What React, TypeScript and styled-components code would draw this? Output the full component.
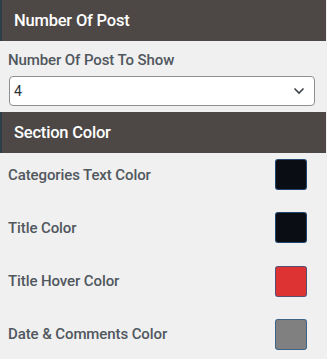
import React from "react";
import styled, { createGlobalStyle } from "styled-components";

const Global = createGlobalStyle`
  html, body { margin: 0; padding: 0; background: #f0f0f0; }
  body { font-family: Roboto, "Noto Sans", Arial, sans-serif; }
`;

const Panel = styled.div`
  width: 326px;
  background: #f0f0f0;
  display: flex;
  flex-direction: column;
`;

const SectionHeader = styled.div`
  height: 41px;
  box-sizing: border-box;
  background: #4d4846;
  border-left: 2px solid #2e3c48;
  padding-left: 12px;
  display: flex;
  align-items: center;
  color: #ffffff;
  font-size: 16.5px;
  font-weight: 500;
  letter-spacing: -0.2px;
`;

const Field = styled.div`
  padding: 9px 12px 6px 9px;
  display: flex;
  flex-direction: column;
  gap: 6px;
`;

const Label = styled.div`
  color: #50575e;
  font-size: 15px;
  line-height: 20px;
  font-weight: 500;
  margin-left: -1px;
  letter-spacing: -0.1px;
`;

const SelectBox = styled.div`
  height: 30px;
  box-sizing: border-box;
  width: 306px;
  background: #ffffff;
  border: 1px solid #8c8f94;
  border-radius: 4px;
  display: flex;
  align-items: center;
  justify-content: space-between;
  padding: 0 9px 0 4px;
  color: #2c3338;
  font-size: 14px;
`;

const ColorList = styled.div`
  display: flex;
  flex-direction: column;
  gap: 22.3px;
  padding: 6px 19px 0 8px;
`;

const ColorRow = styled.div`
  height: 31px;
  display: flex;
  align-items: center;
  justify-content: space-between;
`;

const RowLabel = styled.span`
  color: #50575e;
  font-size: 15px;
  font-weight: 500;
  letter-spacing: -0.1px;
`;

const Swatch = styled.div<{ $color: string }>`
  width: 32px;
  height: 31px;
  box-sizing: border-box;
  border-radius: 3px;
  border: 1px solid rgba(40, 90, 140, 0.75);
  background: ${(p) => p.$color};
`;

const rows = [
  { label: "Categories Text Color", color: "#0b0d14" },
  { label: "Title Color", color: "#0b0d14" },
  { label: "Title Hover Color", color: "#dd3333" },
  { label: "Date & Comments Color", color: "#808080" },
];

export default function App() {
  return (
    <>
      <Global />
      <Panel>
        <SectionHeader>Number Of Post</SectionHeader>
        <Field>
          <Label>Number Of Post To Show</Label>
          <SelectBox>
            <span>4</span>
            <svg width="12" height="8" viewBox="0 0 12 8" fill="none">
              <path d="M1.5 1.5 L6 6 L10.5 1.5" stroke="#3c434a" strokeWidth="1.6" />
            </svg>
          </SelectBox>
        </Field>
        <SectionHeader>Section Color</SectionHeader>
        <ColorList>
          {rows.map((r) => (
            <ColorRow key={r.label}>
              <RowLabel>{r.label}</RowLabel>
              <Swatch $color={r.color} />
            </ColorRow>
          ))}
        </ColorList>
      </Panel>
    </>
  );
}
